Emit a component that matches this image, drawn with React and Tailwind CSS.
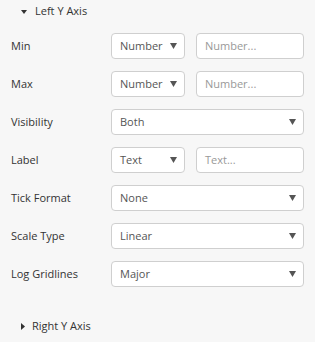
import React from "react";

const font = { fontFamily: '"Open Sans", "Noto Sans", sans-serif' };

function Caret({ down }) {
  return down ? (
    <svg width="6" height="4" viewBox="0 0 6 4" className="text-[#333]">
      <path d="M0 0h6L3 4z" fill="currentColor" />
    </svg>
  ) : (
    <svg width="4" height="7" viewBox="0 0 4 7" className="text-[#333]">
      <path d="M0 0v7l4-3.5z" fill="currentColor" />
    </svg>
  );
}

function Select({ value, wide }) {
  return (
    <div
      className={`flex h-[26px] items-center justify-between rounded-[4px] border border-[#cfcfcf] bg-white pl-[8px] pr-[7px] text-[#555] ${
        wide ? "w-[193px]" : "w-[74px]"
      }`}
    >
      <span>{value}</span>
      <svg width="7" height="6" viewBox="0 0 7 6">
        <path d="M0 0h7L3.5 6z" fill="#555" />
      </svg>
    </div>
  );
}

function Input({ placeholder }) {
  return (
    <div className="flex h-[26px] w-[108px] items-center rounded-[4px] border border-[#cfcfcf] bg-white px-[8px] text-[#999]">
      {placeholder}
    </div>
  );
}

function Row({ label, children }) {
  return (
    <div className="flex h-[26px] items-center">
      <div className="w-[111px] pl-[11px] text-[#333]">{label}</div>
      <div className="flex gap-[11px]">{children}</div>
    </div>
  );
}

export default function App() {
  return (
    <div className="h-[342px] w-[315px] bg-[#f7f7f7] text-[11px]" style={font}>
      <div className="flex h-[23px] items-center gap-[8px] pl-[21px] text-[#333]">
        <Caret down />
        <span>Left Y Axis</span>
      </div>
      <div className="mt-[10px] flex flex-col gap-[12px]">
        <Row label="Min">
          <Select value="Number" />
          <Input placeholder="Number..." />
        </Row>
        <Row label="Max">
          <Select value="Number" />
          <Input placeholder="Number..." />
        </Row>
        <Row label="Visibility">
          <Select value="Both" wide />
        </Row>
        <Row label="Label">
          <Select value="Text" />
          <Input placeholder="Text..." />
        </Row>
        <Row label="Tick Format">
          <Select value="None" wide />
        </Row>
        <Row label="Scale Type">
          <Select value="Linear" wide />
        </Row>
        <Row label="Log Gridlines">
          <Select value="Major" wide />
        </Row>
      </div>
      <div className="mt-[28px] flex h-[23px] items-center gap-[7px] pl-[21px] text-[#333]">
        <Caret />
        <span>Right Y Axis</span>
      </div>
    </div>
  );
}
